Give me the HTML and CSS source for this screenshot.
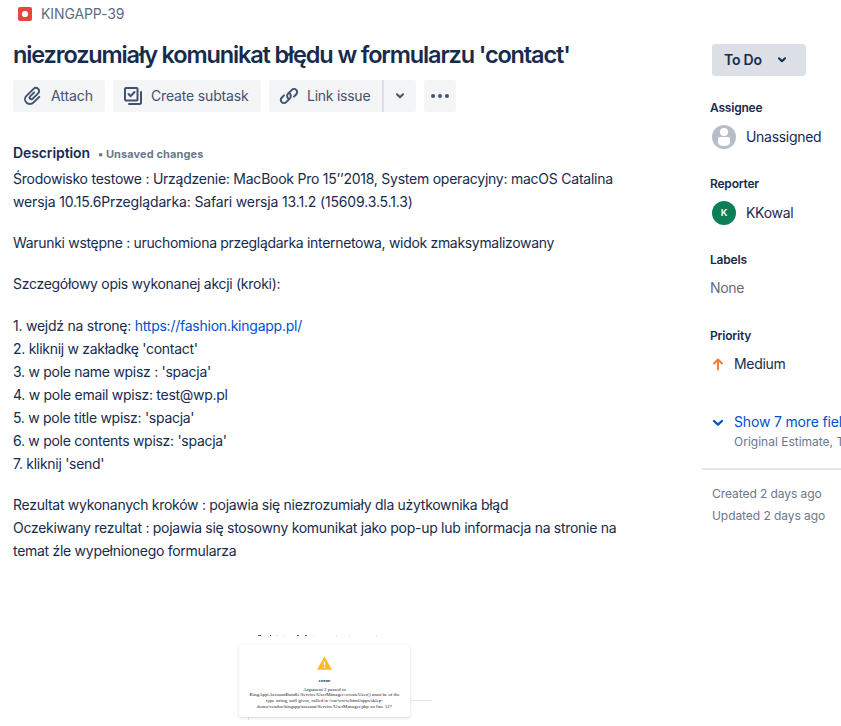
FILE: index.html
```html
<!DOCTYPE html>
<html lang="pl">
<head>
<meta charset="utf-8">
<title>KINGAPP-39</title>
<link rel="stylesheet" href="styles.css">
</head>
<body>
<div class="issue">
  <main class="content">
    <nav class="crumb">
      <svg width="14" height="14" viewBox="0 0 14 14"><rect width="14" height="14" rx="2" fill="#e5483a"/><circle cx="7" cy="7" r="3.1" fill="#fff"/></svg>
      <span>KINGAPP-39</span>
    </nav>
    <h1>niezrozumiały komunikat błędu w formularzu 'contact'</h1>
    <div class="toolbar">
      <button class="btn attach">
        <svg width="24" height="24" viewBox="0 0 24 24" fill="#42526e"><path d="M11.643 17.965c-1.53 1.495-4.016 1.496-5.542.004a3.773 3.773 0 0 1 .002-5.412l7.147-6.985a2.316 2.316 0 0 1 3.22-.004 2.164 2.164 0 0 1-.004 3.12l-5.48 5.35a.817.817 0 0 1-1.13-.01.733.733 0 0 1 .01-1.06l3.97-3.87a.92.92 0 0 0 0-1.32.976.976 0 0 0-1.36 0l-3.96 3.88a2.6 2.6 0 0 0-.01 3.74c1.06 1.03 2.76 1.04 3.84.02l5.48-5.36a4.03 4.03 0 0 0 .01-5.8 4.272 4.272 0 0 0-5.94 0l-7.15 6.99a5.638 5.638 0 0 0 0 8.07c2.28 2.22 5.98 2.23 8.26.01l5.98-5.84a.92.92 0 0 0 0-1.32.976.976 0 0 0-1.36 0z"/></svg>
        <span>Attach</span>
      </button>
      <button class="btn subtask">
        <svg width="24" height="24" viewBox="0 0 24 24" fill="none" stroke="#42526e" stroke-width="2" stroke-linejoin="round" stroke-linecap="round"><rect x="4" y="4" width="12.5" height="12.5" rx="1"/><path d="M7.5 10l2 2.2 4-4.2M20 8v10.5a1.5 1.5 0 0 1-1.5 1.5H8"/></svg>
        <span>Create subtask</span>
      </button>
      <div class="split">
        <button class="btn link">
          <svg width="24" height="24" viewBox="0 0 24 24" fill="none" stroke="#42526e" stroke-width="2" stroke-linecap="round"><path d="M11.300 14.600a3.500 3.500 0 0 1-.200-5l3.700-3.700a3.100 3.100 0 0 1 4.500 4.400l-2.300 2.300"/><path d="M12.700 9.400a3.500 3.500 0 0 1 .200 5l-3.700 3.700a3.100 3.100 0 0 1-4.500-4.400L7 11.400"/></svg>
          <span>Link issue</span>
        </button>
        <button class="btn caret"><svg width="10" height="6" viewBox="0 0 10 6"><path d="M2 1.3l3 2.9 3-2.9" fill="none" stroke="#42526e" stroke-width="2" stroke-linecap="round" stroke-linejoin="round"/></svg></button>
      </div>
      <button class="btn more"><svg width="18" height="4" viewBox="0 0 18 4" fill="#42526e"><circle cx="2" cy="2" r="2"/><circle cx="9" cy="2" r="2"/><circle cx="16" cy="2" r="2"/></svg></button>
    </div>
    <div class="heading"><h2>Description</h2><span class="unsaved">• Unsaved changes</span></div>
    <div class="description">
      <p><span class="env">Środowisko testowe : Urządzenie: MacBook Pro 15’’2018, System operacyjny: macOS Catalina</span><br><span class="version">wersja 10.15.6Przeglądarka: Safari wersja 13.1.2 (15609.3.5.1.3)</span></p>
      <p class="precondition">Warunki wstępne : uruchomiona przeglądarka internetowa, widok zmaksymalizowany</p>
      <p>Szczegółowy opis wykonanej akcji (kroki):</p>
      <p><span class="env">1. wejdź na stronę: <a>https://fashion.kingapp.pl/</a></span><br>2. kliknij w zakładkę 'contact'<br>3. w pole name wpisz : 'spacja'<br>4. w pole email wpisz: test@wp.pl<br>5. w pole title wpisz: 'spacja'<br>6. w pole contents wpisz: 'spacja'<br>7. kliknij 'send'</p>
      <p>Rezultat wykonanych kroków : pojawia się niezrozumiały dla użytkownika błąd<br>Oczekiwany rezultat : pojawia się stosowny komunikat jako pop-up lub informacja na stronie na<br>temat źle wypełnionego formularza</p>
    </div>
    <figure class="shot">
      <svg class="backdrop" width="196" height="86" viewBox="0 0 196 86"><path d="M20 .5h3M32 .5h1M59 .5h2M67 .5h2" stroke="#555"/><path d="M38 .5h2M46 .5h1M75 .5h1M98 .5h1M111 .5h1M138 .5h1" stroke="#ddd"/><path d="M172 65.5h22M10.5 80v5" stroke="#e6e6e6"/></svg>
      <div class="popup">
        <svg width="15" height="14" viewBox="0 0 15 14"><path d="M7.5.3L15 13.7H0z" fill="#fbb92f"/><path d="M6.8 5.4h1.4v4H6.8zM6.8 10.5h1.4v1.4H6.8z" fill="#fff"/></svg>
        <strong>error</strong>
        <div class="message"><span>Argument 2 passed to</span><span>KingApp\AccountBundle\Service\UserManager::createUser() must be of the</span><span>type string, null given, called in /var/www/html/apps/sklep-</span><span>demo/vendor/kingapp/account/Service/UserManager.php on line 127</span></div>
      </div>
    </figure>
  </main>
  <aside class="side">
    <button class="status"><span>To Do</span><svg width="10" height="6" viewBox="0 0 10 6"><path d="M2 1.3l3 2.9 3-2.9" fill="none" stroke="#172b4d" stroke-width="2" stroke-linecap="round" stroke-linejoin="round"/></svg></button>
    <section class="field"><h3>Assignee</h3><div class="value person"><svg width="24" height="24" viewBox="0 0 24 24"><circle cx="12" cy="12" r="12" fill="#b7bec9"/><circle cx="12" cy="7" r="4" fill="#fff"/><path d="M6 14a2 2 0 0 1 2-2h8a2 2 0 0 1 2 2v3.200c0 2.400-2.500 3.800-6 3.800s-6-1.400-6-3.800z" fill="#fff"/></svg><span>Unassigned</span></div></section>
    <section class="field"><h3>Reporter</h3><div class="value person"><b class="avatar">K</b><span>KKowal</span></div></section>
    <section class="field raised"><h3>Labels</h3><div class="value none">None</div></section>
    <section class="field raised"><h3>Priority</h3><div class="value priority"><svg width="12" height="13" viewBox="0 0 12 13"><path d="M6 11.500V2M2 5.500l4-4 4 4" fill="none" stroke="#ea7d37" stroke-width="1.900" stroke-linecap="round" stroke-linejoin="round"/></svg><span>Medium</span></div></section>
    <div class="expand">
      <svg width="12" height="8" viewBox="0 0 12 8"><path d="M2 2l4 3.700L10 2" fill="none" stroke="#0052cc" stroke-width="2.300" stroke-linecap="round" stroke-linejoin="round"/></svg>
      <div><div class="show">Show 7 more fields</div><div class="hint">Original Estimate, Time tracking</div></div>
    </div>
    <footer class="dates"><div>Created 2 days ago</div><div>Updated 2 days ago</div></footer>
  </aside>
</div>
</body>
</html>
```
FILE: styles.css
```css
* { box-sizing: border-box; }
body { margin: 0; background: #fff; color: #172b4d; font: 14px/20px Inter, "Liberation Sans", sans-serif; }
h1, h2, h3, p, figure { margin: 0; }
button { border: 0; font: inherit; color: inherit; }
svg { display: block; flex: none; }
.issue { display: flex; width: 841px; height: 726px; overflow: hidden; }
.content { flex: none; width: 702px; padding: 4px 0 0 13px; }
.crumb { display: flex; align-items: center; gap: 9px; height: 20px; padding-left: 5px; color: #5e6c84; letter-spacing: -.1px; }
h1 { margin-top: 17px; font-size: 23.5px; line-height: 28px; font-weight: 600; letter-spacing: -1.14px; white-space: nowrap; }
.toolbar { display: flex; gap: 8px; margin-top: 11px; }
.btn { display: flex; align-items: center; height: 32px; padding: 0 0 0 8px; gap: 6px; background: #f4f5f7; border-radius: 3px; color: #42526e; white-space: nowrap; }
.attach { width: 92px; letter-spacing: -.08px; }
.subtask { width: 148px; letter-spacing: -.16px; }
.split { display: flex; }
.link { width: 113px; border-radius: 3px 0 0 3px; letter-spacing: -.25px; }
.caret { width: 34px; padding: 0; justify-content: center; border-left: 2px solid #dcdfe5; border-radius: 0 3px 3px 0; }
.more { width: 32px; padding: 0; justify-content: center; }
.heading { display: flex; align-items: center; gap: 8px; height: 20px; margin-top: 31px; }
h2 { font-size: 14px; line-height: 20px; font-weight: 600; letter-spacing: -.1px; }
.unsaved { font-size: 11px; font-weight: 700; color: #6b778c; padding-top: 2px; letter-spacing: .1px; }
.description { display: grid; gap: 18.2px; margin-top: 4px; line-height: 23px; white-space: nowrap; letter-spacing: -.285px; }
.env { letter-spacing: -.24px; }
.version { letter-spacing: -.15px; }
.precondition { letter-spacing: -.315px; }
a { color: #0052cc; }
.shot { width: 196px; margin: 72.8px 0 0 225px; position: relative; }
.backdrop { position: absolute; top: 0; left: 0; }
.popup { display: flex; flex-direction: column; align-items: center; width: 171px; height: 72px; margin-top: 10px; padding-top: 11px; position: absolute; top: 0; left: 1px; background: #fff; border-radius: 2px; box-shadow: 0 1px 3px rgba(0,0,0,.15); font-family: "Liberation Serif", serif; color: #222; }
.popup strong { font-size: 5px; line-height: 6px; margin-top: 8px; }
.message { display: flex; flex-direction: column; align-items: center; margin-top: 3px; font-size: 4.9px; line-height: 5.8px; white-space: nowrap; }
.side { flex: none; width: 139px; padding-top: 44px; overflow: hidden; }
.status { display: flex; align-items: center; gap: 15px; width: 94px; height: 32px; margin-left: 10px; padding: 0 12px; background: #dcdfe5; border-radius: 3px; font-weight: 600; letter-spacing: -.2px; }
.field { height: 76px; padding-left: 8px; }
.status + .field { margin-top: 24px; }
h3 { font-size: 12px; line-height: 16px; font-weight: 600; letter-spacing: -.2px; }
.value { display: flex; align-items: center; height: 24px; margin-top: 9px; letter-spacing: -.3px; }
.raised .value { margin-top: 8px; }
.person { gap: 10px; padding-left: 2px; }
.avatar { display: flex; align-items: center; justify-content: center; width: 24px; height: 24px; border-radius: 50%; background: #0b7f55; color: #fff; font-size: 9.500px; font-weight: 600; }
.none { color: #5e6c84; }
.priority { gap: 10px; padding-left: 2px; }
.expand { display: flex; gap: 10px; margin-top: 8px; padding-left: 10px; white-space: nowrap; }
.expand svg { margin-top: 7px; }
.show { color: #0052cc; letter-spacing: -.17px; }
.hint { font-size: 12px; line-height: 20px; color: #6b778c; }
.dates { margin-top: 16px; padding: 13px 0 0 10px; border-top: 2px solid #e4e5ea; font-size: 12px; line-height: 22px; color: #6b778c; white-space: nowrap; letter-spacing: -.06px; }
```
